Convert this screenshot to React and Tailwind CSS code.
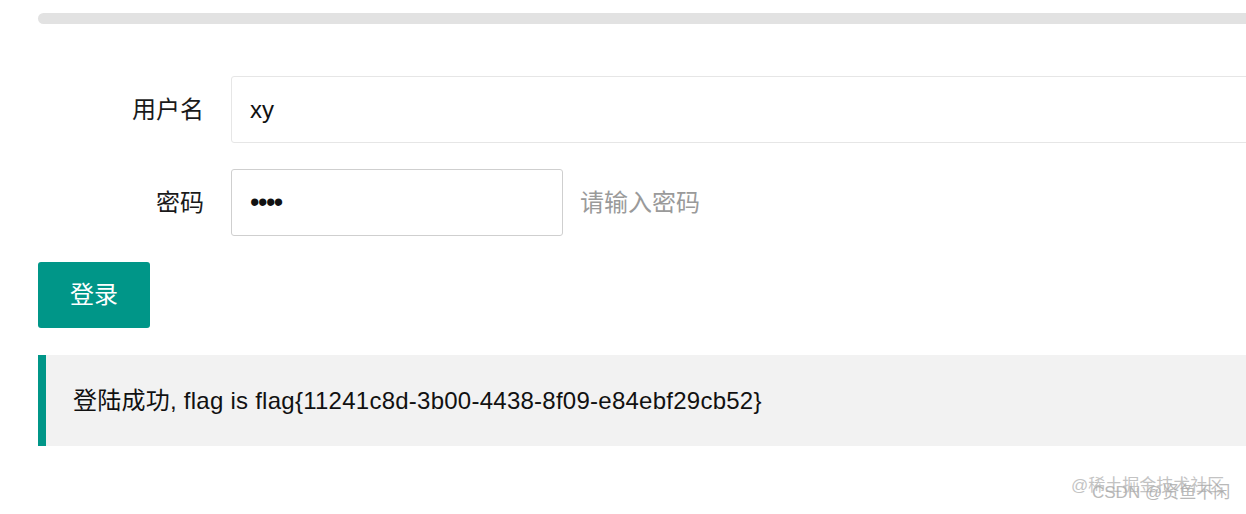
export default function App() {
  const font = { fontFamily: '"Liberation Sans", "Noto Sans CJK SC", sans-serif' };
  return (
    <div className="relative w-[1246px] h-[514px] overflow-hidden bg-white" style={font}>
      <div className="pl-[38px] pt-[13px] w-[1300px]">
        <div className="h-[11px] rounded-full bg-[#e2e2e2]" />
        <div className="mt-[52px] flex items-center h-[67px]">
          <label className="w-[193px] pr-[27px] text-right text-[24px] text-[#1a1a1a]">用户名</label>
          <div className="flex-1 h-[67px] border border-[#e6e6e6] rounded-[3px] flex items-center pl-[18px] text-[24px] text-[#111]">
            xy
          </div>
        </div>
        <div className="mt-[26px] flex items-center h-[67px]">
          <label className="w-[193px] pr-[27px] text-right text-[24px] text-[#1a1a1a]">密码</label>
          <div className="w-[332px] h-[67px] border border-[#cfcfcf] rounded-[3px] flex items-center pl-[18px] text-[27px] text-[#111] tracking-[-1.5px]">
            ••••
          </div>
          <span className="ml-[17px] text-[24px] text-[#9a9a9a]">请输入密码</span>
        </div>
        <div className="mt-[26px]">
          <button className="w-[112px] h-[66px] rounded-[3px] bg-[#009688] text-white text-[24px] flex items-center justify-center">
            登录
          </button>
        </div>
        <div className="mt-[27px] h-[91px] border-l-[8px] border-[#009688] bg-[#f2f2f2] flex items-center pl-[27px] text-[24px] text-[#111] tracking-[0.25px]">
          登陆成功, flag is flag{"{"}11241c8d-3b00-4438-8f09-e84ebf29cb52{"}"}
        </div>
      </div>
      <div className="absolute left-[1071px] top-[477px] text-[17px] leading-none text-[#b5b5b5] opacity-80 whitespace-nowrap">
        @稀土掘金技术社区
      </div>
      <div className="absolute left-[1092px] top-[484px] text-[17px] leading-none text-[#a8a8a8] opacity-80 whitespace-nowrap">
        CSDN @贤鱼不闲
      </div>
    </div>
  );
}
